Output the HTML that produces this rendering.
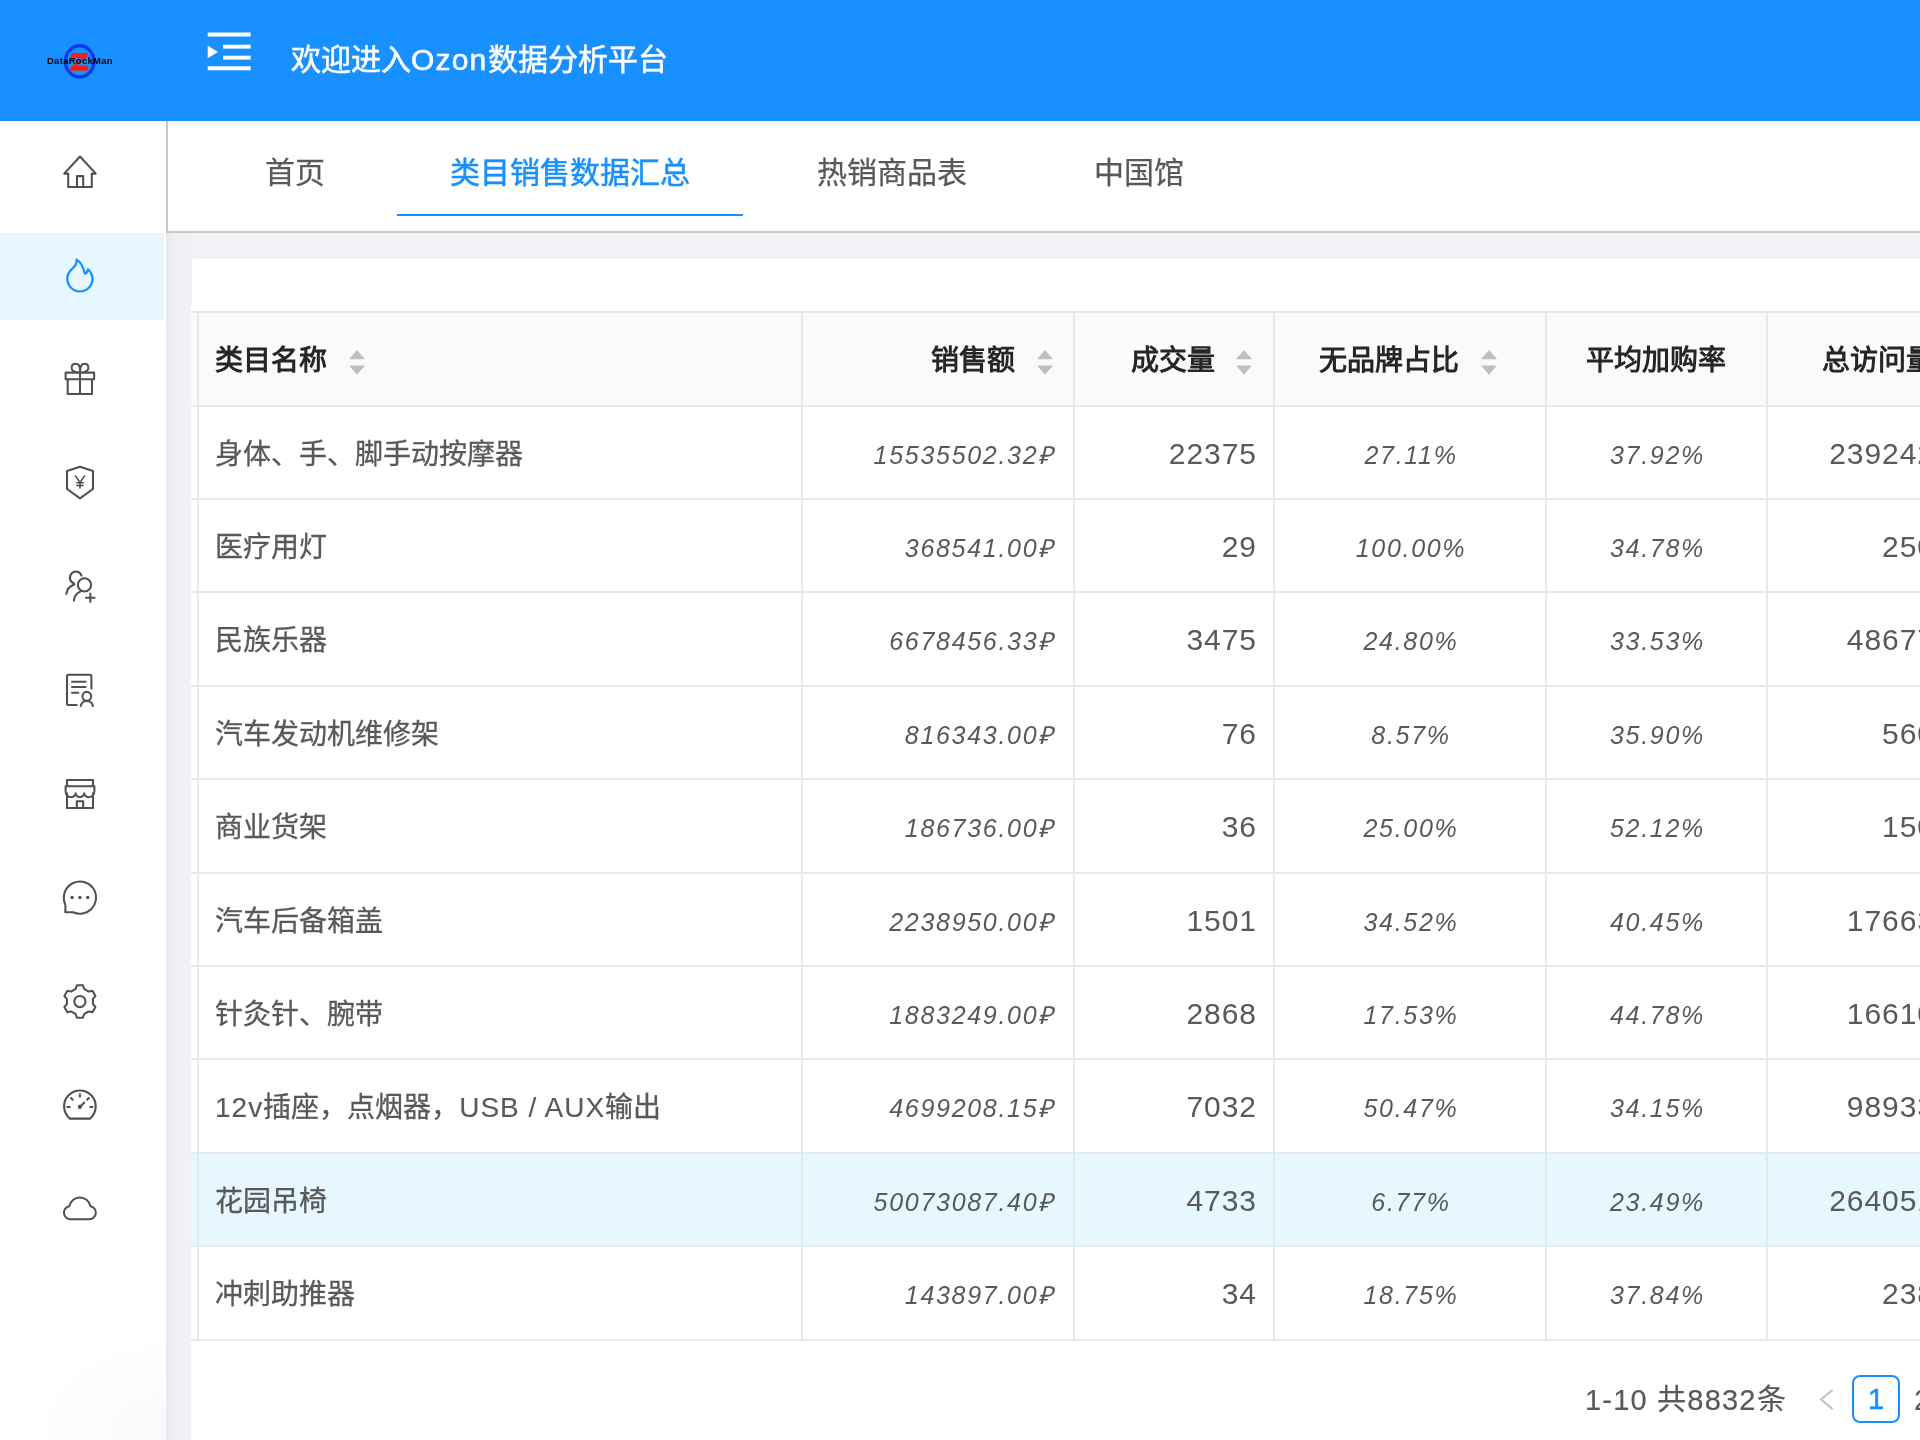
<!DOCTYPE html>
<html lang="zh-CN"><head><meta charset="utf-8"><style>
html,body{margin:0;padding:0;width:1920px;height:1440px;overflow:hidden;background:#f0f2f5;font-family:"Liberation Sans",sans-serif;}
.a{position:absolute;will-change:transform}
#hdr{left:0;top:0;width:1920px;height:121px;background:#1890ff}
#side{left:0;top:121px;width:166px;height:1319px;background:#fff radial-gradient(ellipse 140px 110px at 166px 1319px, rgba(0,0,0,0.025), rgba(0,0,0,0))}
#shadow{left:166px;top:233px;width:25px;height:1207px;background:linear-gradient(to right,#e6e9ee,#eef0f3 40%,#f0f2f5)}
#tabs{left:166px;top:121px;width:1754px;height:110px;background:#fff;border-left:2px solid #c8c8c8;border-bottom:2px solid #c8c8c8}
.tab{position:absolute;top:121px;height:110px;line-height:110px;font-size:30px;color:#595959;white-space:nowrap}
#card{left:192px;top:259px;width:1740px;height:1200px;background:#fff;border-radius:4px 0 0 0}
#tbl{left:191px;top:305px;width:1729px;height:1135px;background:#fff}
.hl{position:absolute;height:2px;background:#e8e8e8}
.vl{position:absolute;width:2px;background:#e8e8e8}
.c{position:absolute;height:93px;line-height:93px;font-size:28px;color:#595959;white-space:nowrap}
.th{color:#262626;font-weight:bold}
.it{font-style:italic}
.ic{position:absolute;left:40px;width:80px;height:80px}
.ic svg{width:80px;height:80px;display:block}
.sort{display:inline-block;vertical-align:middle;width:16px;height:28px;position:relative;top:-2px}
</style></head><body>
<div id="hdr" class="a"></div>
<div id="side" class="a"></div>
<div id="shadow" class="a"></div>
<div id="tabs" class="a"></div>
<div class="a" style="left:168px;top:121px;width:1752px;height:9px;background:linear-gradient(rgba(0,21,41,0.045),rgba(0,21,41,0))"></div>
<div id="card" class="a"></div>
<div id="tbl" class="a"></div>
<div class="a" style="left:191px;top:313px;width:1729px;height:92px;background:#fafafa"></div>
<div class="a" style="left:191px;top:1153.88px;width:1729px;height:91.41px;background:#e6f7ff"></div>
<div class="hl" style="left:191px;top:311px;width:1729px"></div>
<div class="hl" style="left:191px;top:404.60px;width:1729px"></div>
<div class="hl" style="left:191px;top:498.01px;width:1729px"></div>
<div class="hl" style="left:191px;top:591.42px;width:1729px"></div>
<div class="hl" style="left:191px;top:684.83px;width:1729px"></div>
<div class="hl" style="left:191px;top:778.24px;width:1729px"></div>
<div class="hl" style="left:191px;top:871.65px;width:1729px"></div>
<div class="hl" style="left:191px;top:965.06px;width:1729px"></div>
<div class="hl" style="left:191px;top:1058.47px;width:1729px"></div>
<div class="hl" style="left:191px;top:1151.88px;width:1729px"></div>
<div class="hl" style="left:191px;top:1245.29px;width:1729px"></div>
<div class="hl" style="left:191px;top:1338.70px;width:1729px"></div>
<div class="vl" style="left:197px;top:311px;height:1027.70px"></div>
<div class="vl" style="left:801px;top:311px;height:1027.70px"></div>
<div class="vl" style="left:1073px;top:311px;height:1027.70px"></div>
<div class="vl" style="left:1273px;top:311px;height:1027.70px"></div>
<div class="vl" style="left:1545px;top:311px;height:1027.70px"></div>
<div class="vl" style="left:1766px;top:311px;height:1027.70px"></div>
<div class="a" style="left:291px;top:29.5px;font-size:30px;line-height:60px;color:#fff;white-space:nowrap;-webkit-text-stroke:0.55px #fff">欢迎进入<span style="letter-spacing:1.2px">Ozon</span>数据分析平台</div>
<div class="a" style="left:264.6px;top:143px;font-size:30px;line-height:60px;color:#595959;white-space:nowrap;-webkit-text-stroke:0.25px #595959">首页</div>
<div class="a" style="left:449.5px;top:143px;font-size:30px;line-height:60px;color:#1890ff;white-space:nowrap;-webkit-text-stroke:0.5px #1890ff">类目销售数据汇总</div>
<div class="a" style="left:816.8px;top:143px;font-size:30px;line-height:60px;color:#595959;white-space:nowrap;-webkit-text-stroke:0.25px #595959">热销商品表</div>
<div class="a" style="left:1093.5px;top:143px;font-size:30px;line-height:60px;color:#595959;white-space:nowrap;-webkit-text-stroke:0.25px #595959">中国馆</div>
<div class="a" style="left:397px;top:214px;width:346px;height:2px;background:#1890ff"></div>
<div class="a" style="left:215.0px;top:315px;height:92px;line-height:92px;font-size:28px;font-weight:bold;color:#262626;white-space:nowrap">类目名称</div>
<div class="a" style="left:349.0px;top:349.5px;width:16px;height:25px"><svg width="16" height="25" viewBox="0 0 16 25"><path d="M8 0L16 9.2H0Z" fill="#bfbfbf"/><path d="M0 15.5H16L8 24.7Z" fill="#bfbfbf"/></svg></div>
<div class="a" style="left:930.5px;top:315px;height:92px;line-height:92px;font-size:28px;font-weight:bold;color:#262626;white-space:nowrap">销售额</div>
<div class="a" style="left:1036.5px;top:349.5px;width:16px;height:25px"><svg width="16" height="25" viewBox="0 0 16 25"><path d="M8 0L16 9.2H0Z" fill="#bfbfbf"/><path d="M0 15.5H16L8 24.7Z" fill="#bfbfbf"/></svg></div>
<div class="a" style="left:1131.0px;top:315px;height:92px;line-height:92px;font-size:28px;font-weight:bold;color:#262626;white-space:nowrap">成交量</div>
<div class="a" style="left:1236.2px;top:349.5px;width:16px;height:25px"><svg width="16" height="25" viewBox="0 0 16 25"><path d="M8 0L16 9.2H0Z" fill="#bfbfbf"/><path d="M0 15.5H16L8 24.7Z" fill="#bfbfbf"/></svg></div>
<div class="a" style="left:1318.8px;top:315px;height:92px;line-height:92px;font-size:28px;font-weight:bold;color:#262626;white-space:nowrap">无品牌占比</div>
<div class="a" style="left:1480.5px;top:349.5px;width:16px;height:25px"><svg width="16" height="25" viewBox="0 0 16 25"><path d="M8 0L16 9.2H0Z" fill="#bfbfbf"/><path d="M0 15.5H16L8 24.7Z" fill="#bfbfbf"/></svg></div>
<div class="a" style="left:1585.5px;top:315px;height:92px;line-height:92px;font-size:28px;font-weight:bold;color:#262626;white-space:nowrap">平均加购率</div>
<div class="a" style="left:1821.5px;top:315px;height:92px;line-height:92px;font-size:28px;font-weight:bold;color:#262626;white-space:nowrap">总访问量</div>
<div class="a" style="top:408.60px;height:91.41px;line-height:91.41px;left:215px;font-size:28px;color:#595959;white-space:nowrap;-webkit-text-stroke:0.3px #595959">身体、手、脚手动按摩器</div>
<div class="a" style="top:408.60px;height:91.41px;line-height:91.41px;left:801px;width:254px;text-align:right;font-size:25px;font-style:italic;letter-spacing:1.7px;color:#595959;white-space:nowrap;margin-top:1px">15535502.32₽</div>
<div class="a" style="top:408.60px;height:91.41px;line-height:91.41px;left:1073px;width:184px;text-align:right;font-size:30px;letter-spacing:0.95px;color:#595959;white-space:nowrap;margin-top:-1px">22375</div>
<div class="a" style="top:408.60px;height:91.41px;line-height:91.41px;left:1275px;width:272px;text-align:center;font-size:25px;font-style:italic;letter-spacing:1.7px;color:#595959;white-space:nowrap;margin-top:1px">27.11%</div>
<div class="a" style="top:408.60px;height:91.41px;line-height:91.41px;left:1547px;width:221px;text-align:center;font-size:25px;font-style:italic;letter-spacing:1.7px;color:#595959;white-space:nowrap;margin-top:1px">37.92%</div>
<div class="a" style="top:408.60px;height:91.41px;line-height:91.41px;left:1765.4px;width:170px;text-align:right;font-size:30px;letter-spacing:0.95px;color:#595959;white-space:nowrap;margin-top:-1px">239242</div>
<div class="a" style="top:502.01px;height:91.41px;line-height:91.41px;left:215px;font-size:28px;color:#595959;white-space:nowrap;-webkit-text-stroke:0.3px #595959">医疗用灯</div>
<div class="a" style="top:502.01px;height:91.41px;line-height:91.41px;left:801px;width:254px;text-align:right;font-size:25px;font-style:italic;letter-spacing:1.7px;color:#595959;white-space:nowrap;margin-top:1px">368541.00₽</div>
<div class="a" style="top:502.01px;height:91.41px;line-height:91.41px;left:1073px;width:184px;text-align:right;font-size:30px;letter-spacing:0.95px;color:#595959;white-space:nowrap;margin-top:-1px">29</div>
<div class="a" style="top:502.01px;height:91.41px;line-height:91.41px;left:1275px;width:272px;text-align:center;font-size:25px;font-style:italic;letter-spacing:1.7px;color:#595959;white-space:nowrap;margin-top:1px">100.00%</div>
<div class="a" style="top:502.01px;height:91.41px;line-height:91.41px;left:1547px;width:221px;text-align:center;font-size:25px;font-style:italic;letter-spacing:1.7px;color:#595959;white-space:nowrap;margin-top:1px">34.78%</div>
<div class="a" style="top:502.01px;height:91.41px;line-height:91.41px;left:1765.4px;width:170px;text-align:right;font-size:30px;letter-spacing:0.95px;color:#595959;white-space:nowrap;margin-top:-1px">250</div>
<div class="a" style="top:595.42px;height:91.41px;line-height:91.41px;left:215px;font-size:28px;color:#595959;white-space:nowrap;-webkit-text-stroke:0.3px #595959">民族乐器</div>
<div class="a" style="top:595.42px;height:91.41px;line-height:91.41px;left:801px;width:254px;text-align:right;font-size:25px;font-style:italic;letter-spacing:1.7px;color:#595959;white-space:nowrap;margin-top:1px">6678456.33₽</div>
<div class="a" style="top:595.42px;height:91.41px;line-height:91.41px;left:1073px;width:184px;text-align:right;font-size:30px;letter-spacing:0.95px;color:#595959;white-space:nowrap;margin-top:-1px">3475</div>
<div class="a" style="top:595.42px;height:91.41px;line-height:91.41px;left:1275px;width:272px;text-align:center;font-size:25px;font-style:italic;letter-spacing:1.7px;color:#595959;white-space:nowrap;margin-top:1px">24.80%</div>
<div class="a" style="top:595.42px;height:91.41px;line-height:91.41px;left:1547px;width:221px;text-align:center;font-size:25px;font-style:italic;letter-spacing:1.7px;color:#595959;white-space:nowrap;margin-top:1px">33.53%</div>
<div class="a" style="top:595.42px;height:91.41px;line-height:91.41px;left:1765.4px;width:170px;text-align:right;font-size:30px;letter-spacing:0.95px;color:#595959;white-space:nowrap;margin-top:-1px">48677</div>
<div class="a" style="top:688.83px;height:91.41px;line-height:91.41px;left:215px;font-size:28px;color:#595959;white-space:nowrap;-webkit-text-stroke:0.3px #595959">汽车发动机维修架</div>
<div class="a" style="top:688.83px;height:91.41px;line-height:91.41px;left:801px;width:254px;text-align:right;font-size:25px;font-style:italic;letter-spacing:1.7px;color:#595959;white-space:nowrap;margin-top:1px">816343.00₽</div>
<div class="a" style="top:688.83px;height:91.41px;line-height:91.41px;left:1073px;width:184px;text-align:right;font-size:30px;letter-spacing:0.95px;color:#595959;white-space:nowrap;margin-top:-1px">76</div>
<div class="a" style="top:688.83px;height:91.41px;line-height:91.41px;left:1275px;width:272px;text-align:center;font-size:25px;font-style:italic;letter-spacing:1.7px;color:#595959;white-space:nowrap;margin-top:1px">8.57%</div>
<div class="a" style="top:688.83px;height:91.41px;line-height:91.41px;left:1547px;width:221px;text-align:center;font-size:25px;font-style:italic;letter-spacing:1.7px;color:#595959;white-space:nowrap;margin-top:1px">35.90%</div>
<div class="a" style="top:688.83px;height:91.41px;line-height:91.41px;left:1765.4px;width:170px;text-align:right;font-size:30px;letter-spacing:0.95px;color:#595959;white-space:nowrap;margin-top:-1px">560</div>
<div class="a" style="top:782.24px;height:91.41px;line-height:91.41px;left:215px;font-size:28px;color:#595959;white-space:nowrap;-webkit-text-stroke:0.3px #595959">商业货架</div>
<div class="a" style="top:782.24px;height:91.41px;line-height:91.41px;left:801px;width:254px;text-align:right;font-size:25px;font-style:italic;letter-spacing:1.7px;color:#595959;white-space:nowrap;margin-top:1px">186736.00₽</div>
<div class="a" style="top:782.24px;height:91.41px;line-height:91.41px;left:1073px;width:184px;text-align:right;font-size:30px;letter-spacing:0.95px;color:#595959;white-space:nowrap;margin-top:-1px">36</div>
<div class="a" style="top:782.24px;height:91.41px;line-height:91.41px;left:1275px;width:272px;text-align:center;font-size:25px;font-style:italic;letter-spacing:1.7px;color:#595959;white-space:nowrap;margin-top:1px">25.00%</div>
<div class="a" style="top:782.24px;height:91.41px;line-height:91.41px;left:1547px;width:221px;text-align:center;font-size:25px;font-style:italic;letter-spacing:1.7px;color:#595959;white-space:nowrap;margin-top:1px">52.12%</div>
<div class="a" style="top:782.24px;height:91.41px;line-height:91.41px;left:1765.4px;width:170px;text-align:right;font-size:30px;letter-spacing:0.95px;color:#595959;white-space:nowrap;margin-top:-1px">150</div>
<div class="a" style="top:875.65px;height:91.41px;line-height:91.41px;left:215px;font-size:28px;color:#595959;white-space:nowrap;-webkit-text-stroke:0.3px #595959">汽车后备箱盖</div>
<div class="a" style="top:875.65px;height:91.41px;line-height:91.41px;left:801px;width:254px;text-align:right;font-size:25px;font-style:italic;letter-spacing:1.7px;color:#595959;white-space:nowrap;margin-top:1px">2238950.00₽</div>
<div class="a" style="top:875.65px;height:91.41px;line-height:91.41px;left:1073px;width:184px;text-align:right;font-size:30px;letter-spacing:0.95px;color:#595959;white-space:nowrap;margin-top:-1px">1501</div>
<div class="a" style="top:875.65px;height:91.41px;line-height:91.41px;left:1275px;width:272px;text-align:center;font-size:25px;font-style:italic;letter-spacing:1.7px;color:#595959;white-space:nowrap;margin-top:1px">34.52%</div>
<div class="a" style="top:875.65px;height:91.41px;line-height:91.41px;left:1547px;width:221px;text-align:center;font-size:25px;font-style:italic;letter-spacing:1.7px;color:#595959;white-space:nowrap;margin-top:1px">40.45%</div>
<div class="a" style="top:875.65px;height:91.41px;line-height:91.41px;left:1765.4px;width:170px;text-align:right;font-size:30px;letter-spacing:0.95px;color:#595959;white-space:nowrap;margin-top:-1px">17663</div>
<div class="a" style="top:969.06px;height:91.41px;line-height:91.41px;left:215px;font-size:28px;color:#595959;white-space:nowrap;-webkit-text-stroke:0.3px #595959">针灸针、腕带</div>
<div class="a" style="top:969.06px;height:91.41px;line-height:91.41px;left:801px;width:254px;text-align:right;font-size:25px;font-style:italic;letter-spacing:1.7px;color:#595959;white-space:nowrap;margin-top:1px">1883249.00₽</div>
<div class="a" style="top:969.06px;height:91.41px;line-height:91.41px;left:1073px;width:184px;text-align:right;font-size:30px;letter-spacing:0.95px;color:#595959;white-space:nowrap;margin-top:-1px">2868</div>
<div class="a" style="top:969.06px;height:91.41px;line-height:91.41px;left:1275px;width:272px;text-align:center;font-size:25px;font-style:italic;letter-spacing:1.7px;color:#595959;white-space:nowrap;margin-top:1px">17.53%</div>
<div class="a" style="top:969.06px;height:91.41px;line-height:91.41px;left:1547px;width:221px;text-align:center;font-size:25px;font-style:italic;letter-spacing:1.7px;color:#595959;white-space:nowrap;margin-top:1px">44.78%</div>
<div class="a" style="top:969.06px;height:91.41px;line-height:91.41px;left:1765.4px;width:170px;text-align:right;font-size:30px;letter-spacing:0.95px;color:#595959;white-space:nowrap;margin-top:-1px">16610</div>
<div class="a" style="top:1062.47px;height:91.41px;line-height:91.41px;left:215px;font-size:28px;color:#595959;white-space:nowrap;-webkit-text-stroke:0.3px #595959"><span style="letter-spacing:1px;-webkit-text-stroke:0.1px #595959">12v</span>插座，点烟器，<span style="letter-spacing:1px;-webkit-text-stroke:0.1px #595959">USB / AUX</span>输出</div>
<div class="a" style="top:1062.47px;height:91.41px;line-height:91.41px;left:801px;width:254px;text-align:right;font-size:25px;font-style:italic;letter-spacing:1.7px;color:#595959;white-space:nowrap;margin-top:1px">4699208.15₽</div>
<div class="a" style="top:1062.47px;height:91.41px;line-height:91.41px;left:1073px;width:184px;text-align:right;font-size:30px;letter-spacing:0.95px;color:#595959;white-space:nowrap;margin-top:-1px">7032</div>
<div class="a" style="top:1062.47px;height:91.41px;line-height:91.41px;left:1275px;width:272px;text-align:center;font-size:25px;font-style:italic;letter-spacing:1.7px;color:#595959;white-space:nowrap;margin-top:1px">50.47%</div>
<div class="a" style="top:1062.47px;height:91.41px;line-height:91.41px;left:1547px;width:221px;text-align:center;font-size:25px;font-style:italic;letter-spacing:1.7px;color:#595959;white-space:nowrap;margin-top:1px">34.15%</div>
<div class="a" style="top:1062.47px;height:91.41px;line-height:91.41px;left:1765.4px;width:170px;text-align:right;font-size:30px;letter-spacing:0.95px;color:#595959;white-space:nowrap;margin-top:-1px">98933</div>
<div class="a" style="top:1155.88px;height:91.41px;line-height:91.41px;left:215px;font-size:28px;color:#595959;white-space:nowrap;-webkit-text-stroke:0.3px #595959">花园吊椅</div>
<div class="a" style="top:1155.88px;height:91.41px;line-height:91.41px;left:801px;width:254px;text-align:right;font-size:25px;font-style:italic;letter-spacing:1.7px;color:#595959;white-space:nowrap;margin-top:1px">50073087.40₽</div>
<div class="a" style="top:1155.88px;height:91.41px;line-height:91.41px;left:1073px;width:184px;text-align:right;font-size:30px;letter-spacing:0.95px;color:#595959;white-space:nowrap;margin-top:-1px">4733</div>
<div class="a" style="top:1155.88px;height:91.41px;line-height:91.41px;left:1275px;width:272px;text-align:center;font-size:25px;font-style:italic;letter-spacing:1.7px;color:#595959;white-space:nowrap;margin-top:1px">6.77%</div>
<div class="a" style="top:1155.88px;height:91.41px;line-height:91.41px;left:1547px;width:221px;text-align:center;font-size:25px;font-style:italic;letter-spacing:1.7px;color:#595959;white-space:nowrap;margin-top:1px">23.49%</div>
<div class="a" style="top:1155.88px;height:91.41px;line-height:91.41px;left:1765.4px;width:170px;text-align:right;font-size:30px;letter-spacing:0.95px;color:#595959;white-space:nowrap;margin-top:-1px">264051</div>
<div class="a" style="top:1249.29px;height:91.41px;line-height:91.41px;left:215px;font-size:28px;color:#595959;white-space:nowrap;-webkit-text-stroke:0.3px #595959">冲刺助推器</div>
<div class="a" style="top:1249.29px;height:91.41px;line-height:91.41px;left:801px;width:254px;text-align:right;font-size:25px;font-style:italic;letter-spacing:1.7px;color:#595959;white-space:nowrap;margin-top:1px">143897.00₽</div>
<div class="a" style="top:1249.29px;height:91.41px;line-height:91.41px;left:1073px;width:184px;text-align:right;font-size:30px;letter-spacing:0.95px;color:#595959;white-space:nowrap;margin-top:-1px">34</div>
<div class="a" style="top:1249.29px;height:91.41px;line-height:91.41px;left:1275px;width:272px;text-align:center;font-size:25px;font-style:italic;letter-spacing:1.7px;color:#595959;white-space:nowrap;margin-top:1px">18.75%</div>
<div class="a" style="top:1249.29px;height:91.41px;line-height:91.41px;left:1547px;width:221px;text-align:center;font-size:25px;font-style:italic;letter-spacing:1.7px;color:#595959;white-space:nowrap;margin-top:1px">37.84%</div>
<div class="a" style="top:1249.29px;height:91.41px;line-height:91.41px;left:1765.4px;width:170px;text-align:right;font-size:30px;letter-spacing:0.95px;color:#595959;white-space:nowrap;margin-top:-1px">238</div>
<div class="a" style="left:1585px;top:1372px;font-size:29px;line-height:56px;color:#595959;white-space:nowrap;letter-spacing:1.2px;-webkit-text-stroke:0.2px #595959">1-10 共8832条</div>
<div class="a" style="left:1819px;top:1389px;width:15px;height:21px"><svg width="15" height="21" viewBox="0 0 15 21"><path d="M13.5 1L2 10.5L13.5 20" stroke="#bfbfbf" stroke-width="2" fill="none"/></svg></div>
<div class="a" style="left:1851.5px;top:1374.5px;width:44px;height:44px;border:2px solid #1890ff;border-radius:8px;background:#fff;font-size:29px;line-height:44px;text-align:center;color:#1890ff;-webkit-text-stroke:0.6px #1890ff">1</div>
<div class="a" style="left:1914px;top:1372px;font-size:29px;line-height:56px;color:#595959;white-space:nowrap">2</div>
<div class="a" style="left:0;top:233px;width:164px;height:87px;background:#e6f7ff"></div>
<svg class="a" style="left:0;top:0" width="166" height="1440" viewBox="0 0 166 1440"><path d="M68.2 187V173.6H64.2L80 156.5L95.8 173.6H91.8V187Z M77 187V176.1H83.2V187" stroke="#505050" stroke-width="2.05" fill="none" stroke-linejoin="round"/><path d="M79.9 291.4A12.6 12.6 0 0 1 67.3 278.8C67.3 273.8 70 270.6 72.6 268.4C75.2 266.2 76.9 263.2 76.6 259.6C80.6 262.2 83 266.3 84 271C84.4 273.6 85.6 274.4 86.6 272.6L88 269.4C90.8 272 92.5 275.2 92.5 278.8A12.6 12.6 0 0 1 79.9 291.4Z" stroke="#1890ff" stroke-width="2.3" fill="none" stroke-linejoin="round"/><path d="M65.6 372.6H94.1V379.2H65.6Z M67.7 379.2V394H92V379.2 M80 372.6V394 M80 372.4C76.5 372.4 71.6 371.8 71.6 368C71.6 365.4 73.4 363.8 75.6 363.8C78.3 363.8 80 366 80 369.5V372.4C80 366 81.7 363.8 84.4 363.8C86.6 363.8 88.4 365.4 88.4 368C88.4 371.8 83.5 372.4 80 372.4Z" stroke="#505050" stroke-width="2.05" fill="none" stroke-linejoin="round"/><path d="M80 466.7L93 470.9V489L80 498.4L67 489V470.9Z" stroke="#505050" stroke-width="2.05" fill="none" stroke-linejoin="round"/><path d="M75.2 475.6L80 482.4L84.8 475.6 M76.2 482.8H83.8 M76.2 485.5H83.8 M80 482.4V488.6" stroke="#505050" stroke-width="1.6" fill="none"/><path d="M81.5 575.6A6 6 0 1 0 73.85 583.3L74.2 584.5C69.6 586.2 66.8 589.6 66.3 594" stroke="#505050" stroke-width="2.05" fill="none" stroke-linecap="round"/><circle cx="84.5" cy="584.9" r="6.6" stroke="#505050" stroke-width="2.05" fill="none"/><path d="M80.6 591.4C76.6 593.2 74.2 596.6 73.9 600.6 M90.3 593.4V602 M86 597.7H94.6" stroke="#505050" stroke-width="2.05" fill="none" stroke-linecap="round"/><path d="M76.7 705H68.5A1.5 1.5 0 0 1 67 703.5V676.3A1.5 1.5 0 0 1 68.5 674.8H89.9A1.5 1.5 0 0 1 91.4 676.3V688.6 M72 681.7H85.6 M72 687H85.6 M72 692.8H78.3" stroke="#505050" stroke-width="2.05" fill="none" stroke-linecap="round"/><circle cx="86.8" cy="696.3" r="4.4" stroke="#505050" stroke-width="2.05" fill="none"/><path d="M80.7 706A6.2 6.2 0 0 1 92.9 706" stroke="#505050" stroke-width="2.05" fill="none" stroke-linecap="round"/><path d="M67 792.5V808H93V792.5 M67 786.3V780H93V786.3 M65.6 786.3H94.4V791C94.4 794.6 91.8 797.2 88.4 797.2C85.8 797.2 84.2 794.6 84.2 793.2C84.2 794.6 82.6 797.2 79.9 797.2C77.2 797.2 75.6 794.6 75.6 793.2C75.6 794.6 74 797.2 71.4 797.2C68 797.2 65.6 794.6 65.6 791Z M76.8 808V801.3H83.2V808" stroke="#505050" stroke-width="2.05" fill="none" stroke-linejoin="round"/><path d="M65.2 904.3A16.2 16.2 0 0 1 94.58 890.65A16.2 16.2 0 0 1 73.05 912.2C71 912.2 68.6 912.2 65.3 912.2C65.3 908.8 65.8 906.6 65.2 904.3Z" stroke="#505050" stroke-width="2.05" fill="none" stroke-linejoin="round"/><circle cx="72.1" cy="897.5" r="1.7" fill="#505050"/><circle cx="79.9" cy="897.5" r="1.7" fill="#505050"/><circle cx="87.7" cy="897.5" r="1.7" fill="#505050"/><path d="M75.70 988.90 L76.90 985.30 L82.90 985.30 L84.10 988.90 L88.71 991.56 L92.43 990.80 L95.43 996.00 L92.91 998.84 L92.91 1004.16 L95.43 1007.00 L92.43 1012.20 L88.71 1011.44 L84.10 1014.10 L82.90 1017.70 L76.90 1017.70 L75.70 1014.10 L71.09 1011.44 L67.37 1012.20 L64.37 1007.00 L66.89 1004.16 L66.89 998.84 L64.37 996.00 L67.37 990.80 L71.09 991.56Z" stroke="#505050" stroke-width="2.05" fill="none" stroke-linejoin="round"/><circle cx="79.9" cy="1001.5" r="5.6" stroke="#505050" stroke-width="2.05" fill="none"/><path d="M69.9 1118.6A15.8 15.8 0 1 1 89.9 1118.6Z" stroke="#505050" stroke-width="2.05" fill="none" stroke-linejoin="round"/><path d="M69.70 1106.90L67.30 1106.90 M72.69 1099.69L70.99 1097.99 M79.90 1096.70L79.90 1094.30 M87.11 1099.69L88.81 1097.99 M90.10 1106.90L92.50 1106.90 M79.9 1106.9L84.3 1102.6" stroke="#505050" stroke-width="2.05" fill="none" stroke-linecap="round"/><circle cx="79.9" cy="1106.9" r="2.1" fill="#505050"/><path d="M70.4 1219.2H89.4A6.5 6.5 0 0 0 90.5 1206.3A10.8 10.8 0 0 0 69.3 1206.3A6.5 6.5 0 0 0 70.4 1219.2Z" stroke="#505050" stroke-width="2.05" fill="none" stroke-linejoin="round"/></svg>
<svg class="a" style="left:0;top:0" width="300" height="121" viewBox="0 0 300 121"><rect x="207.7" y="32.5" width="43" height="4" fill="#fff"/><rect x="223" y="44.7" width="27.7" height="3.9" fill="#fff"/><rect x="223" y="55.7" width="27.7" height="3.9" fill="#fff"/><rect x="207.7" y="66.3" width="43" height="4" fill="#fff"/><path d="M207.7 45.5L218 51.9L207.7 58.3Z" fill="#fff"/><ellipse cx="79.7" cy="61.4" rx="14.3" ry="15.6" stroke="#0a3ae8" stroke-width="3.4" fill="none"/><path d="M71.2 53H87.6V56.3L76 65.6H88.1V70.8H70.3V67.5L81.8 58.2H71.2Z" fill="#ff1a1a"/></svg>
<div class="a" style="left:46.5px;top:55px;font-size:9.4px;line-height:12px;font-weight:bold;color:#000;letter-spacing:0.35px;white-space:nowrap">DataRockMan</div>
</body></html>
